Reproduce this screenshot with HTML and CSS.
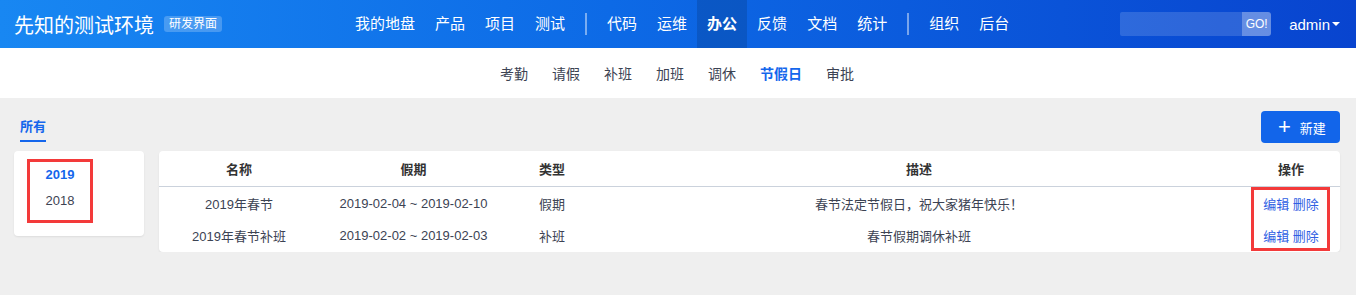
FILE: index.html
```html
<!DOCTYPE html>
<html lang="zh-CN">
<head>
    <meta charset="UTF-8">
    <meta name="viewport" content="width=device-width, initial-scale=1.0">
    <title>节假日 - 先知的测试环境</title>
    <link rel="stylesheet" href="styles.css">
</head>
<body>
    <header class="topbar">
        <div class="brand">
            <span class="brand-title">先知的测试环境</span>
            <span class="brand-tag">研发界面</span>
        </div>
        <nav class="mainnav">
            <a href="#">我的地盘</a>
            <a href="#">产品</a>
            <a href="#">项目</a>
            <a href="#">测试</a>
            <span class="divider"></span>
            <a href="#">代码</a>
            <a href="#">运维</a>
            <a href="#" class="active">办公</a>
            <a href="#">反馈</a>
            <a href="#">文档</a>
            <a href="#">统计</a>
            <span class="divider"></span>
            <a href="#">组织</a>
            <a href="#">后台</a>
        </nav>
        <div class="topbar-right">
            <form class="search">
                <input type="text">
                <button type="button">GO!</button>
            </form>
            <a href="#" class="user">admin<span class="caret"></span></a>
        </div>
    </header>

    <nav class="subnav">
        <a href="#">考勤</a>
        <a href="#">请假</a>
        <a href="#">补班</a>
        <a href="#">加班</a>
        <a href="#">调休</a>
        <a href="#" class="active">节假日</a>
        <a href="#">审批</a>
    </nav>

    <main class="content">
        <div class="toolbar">
            <a href="#" class="tab active">所有</a>
            <button class="btn-primary"><span class="plus">+</span>新建</button>
        </div>
        <div class="layout">
            <aside class="side-card">
                <ul class="year-list">
                    <li class="active">2019</li>
                    <li>2018</li>
                </ul>
            </aside>
            <section class="table-card">
                <table>
                    <thead>
                        <tr>
                            <th class="c-name">名称</th>
                            <th class="c-date">假期</th>
                            <th class="c-type">类型</th>
                            <th class="c-desc">描述</th>
                            <th class="c-ops">操作</th>
                        </tr>
                    </thead>
                    <tbody>
                        <tr>
                            <td>2019年春节</td>
                            <td>2019-02-04 ~ 2019-02-10</td>
                            <td>假期</td>
                            <td>春节法定节假日，祝大家猪年快乐！</td>
                            <td class="ops"><a href="#">编辑</a> <a href="#">删除</a></td>
                        </tr>
                        <tr>
                            <td>2019年春节补班</td>
                            <td>2019-02-02 ~ 2019-02-03</td>
                            <td>补班</td>
                            <td>春节假期调休补班</td>
                            <td class="ops"><a href="#">编辑</a> <a href="#">删除</a></td>
                        </tr>
                    </tbody>
                </table>
                <div class="mark"></div>
            </section>
        </div>
    </main>
</body>
</html>
```

FILE: styles.css
```css
body {
    margin: 0;
    padding: 0;
    background: #efefef;
    font-family: "Liberation Sans", "Noto Sans CJK SC", sans-serif;
    font-size: 13px;
    color: #3c4353;
}
a {
    text-decoration: none;
}

/* top bar */
.topbar {
    display: flex;
    align-items: center;
    height: 48px;
    padding: 0 16px 0 14px;
    background: linear-gradient(90deg, #1887f2 0%, #0d6ae6 45%, #0844cf 100%);
    color: #fff;
}
.brand {
    display: flex;
    align-items: center;
    width: 331px;
}
.brand-title {
    font-size: 20px;
}
.brand-tag {
    margin-left: 10px;
    padding: 1px 5px;
    font-size: 12px;
    line-height: 14px;
    border-radius: 3px;
    background: rgba(255, 255, 255, 0.22);
}
.mainnav {
    display: flex;
    align-items: center;
    height: 48px;
}
.mainnav a {
    color: #fff;
    font-size: 15px;
    line-height: 48px;
    padding: 0 10px;
}
.mainnav a.active {
    font-weight: bold;
    background: rgba(0, 0, 0, 0.13);
}
.mainnav .divider {
    width: 2px;
    height: 22px;
    margin: 0 10px;
    background: rgba(255, 255, 255, 0.45);
}
.topbar-right {
    flex: 1;
    display: flex;
    justify-content: flex-end;
    align-items: center;
}
.search {
    display: flex;
    margin: 0;
}
.search input {
    width: 122px;
    height: 24px;
    box-sizing: border-box;
    border: none;
    border-radius: 2px 0 0 2px;
    background: rgba(255, 255, 255, 0.15);
}
.search button {
    width: 29px;
    height: 24px;
    padding: 0;
    border: none;
    border-radius: 0 3px 3px 0;
    background: rgba(255, 255, 255, 0.38);
    color: #fff;
    font-family: inherit;
    font-size: 12px;
}
.user {
    display: flex;
    align-items: center;
    margin-left: 18px;
    color: #fff;
    font-size: 15px;
}
.caret {
    margin-left: 2px;
    border-left: 4px solid transparent;
    border-right: 4px solid transparent;
    border-top: 4px solid #fff;
}

/* sub nav */
.subnav {
    display: flex;
    justify-content: center;
    height: 50px;
    align-items: center;
    background: #fff;
    padding-right: 2px;
}
.subnav a {
    padding: 0 12px;
    font-size: 14px;
    color: #3c4353;
}
.subnav a.active {
    color: #1466ec;
    font-weight: bold;
}

/* content */
.content {
    padding: 13px 16px 0 14px;
}
.toolbar {
    display: flex;
    justify-content: space-between;
    align-items: center;
    height: 32px;
}
.tab {
    margin-left: 6px;
    padding: 4px 0 5px;
    color: #1466ec;
    font-weight: bold;
    font-size: 13px;
    border-bottom: 2px solid #1466ec;
}
.btn-primary {
    display: flex;
    align-items: center;
    height: 32px;
    width: 79px;
    padding: 0 0 0 17px;
    border: none;
    border-radius: 4px;
    background: #1265ea;
    color: #fff;
    font-family: inherit;
    font-size: 13px;
}
.plus {
    font-size: 22px;
    line-height: 20px;
    margin-right: 9px;
    font-weight: normal;
}
.layout {
    display: flex;
    gap: 15px;
    margin-top: 8px;
    align-items: flex-start;
}
.side-card {
    width: 130px;
    box-sizing: border-box;
    padding: 8px 13px 13px;
    background: #fff;
    border-radius: 4px;
    box-shadow: 0 1px 2px rgba(0, 0, 0, 0.08);
}
.year-list {
    list-style: none;
    margin: 0;
    padding: 0 0 6px;
    width: 60px;
    border: 3px solid #f33a3a;
}
.year-list li {
    line-height: 26px;
    text-align: center;
    font-size: 13px;
}
.year-list li.active {
    color: #1466ec;
    font-weight: bold;
}
.table-card {
    flex: 1;
    position: relative;
    background: #fff;
    border-radius: 4px;
    box-shadow: 0 1px 2px rgba(0, 0, 0, 0.08);
    padding-bottom: 1px;
}
table {
    width: 100%;
    border-collapse: collapse;
}
th, td {
    text-align: center;
    padding: 0;
}
th {
    height: 35px;
    font-weight: bold;
    color: #333;
    border-bottom: 1px solid #cbd2dc;
}
td {
    height: 32px;
}
.c-name { width: 160px; }
.c-date { width: 189px; }
.c-type { width: 88px; }
.c-ops { width: 98px; }
.ops a {
    color: #2f5fe3;
}
.mark {
    position: absolute;
    right: 10px;
    bottom: 1px;
    width: 73px;
    height: 58px;
    border: 3px solid #f33a3a;
}
```
